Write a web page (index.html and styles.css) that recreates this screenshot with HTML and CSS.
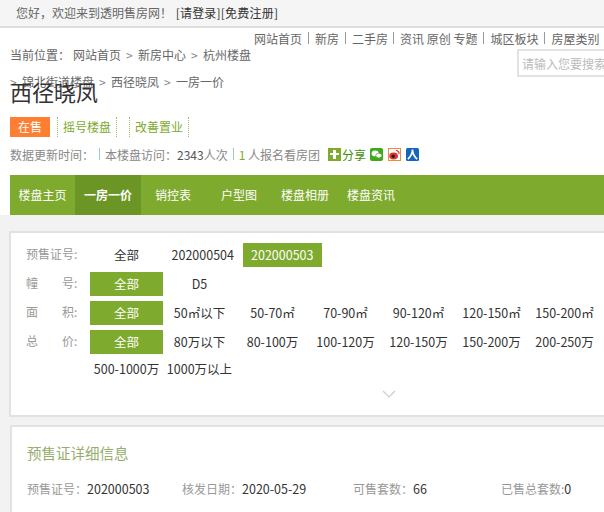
FILE: index.html
```html
<!DOCTYPE html>
<html lang="zh-CN">
<head>
    <meta charset="UTF-8">
    <meta name="viewport" content="width=device-width, initial-scale=1.0">
    <title>西径晓凤 一房一价</title>
    <link rel="stylesheet" href="styles.css">
</head>
<body>
    <div class="topbar">
        <span>您好，欢迎来到透明售房网！</span>
        <a class="login" href="#">[请登录][免费注册]</a>
    </div>

    <div class="head">
        <div class="crumbs">
            <span class="here">当前位置：</span>
            <a href="#">网站首页</a>
            <a href="#"><s>&gt;</s>新房中心</a>
            <a href="#"><s>&gt;</s>杭州楼盘</a>
            <a href="#"><s>&gt;</s>锦北街道楼盘</a>
            <a href="#"><s>&gt;</s>西径晓凤</a>
            <a href="#"><s>&gt;</s>一房一价</a>
        </div>
        <div class="head-right">
            <div class="site-nav">
                <a href="#">网站首页</a><i></i><a href="#">新房</a><i></i><a href="#">二手房</a><i class="tight"></i><a href="#">资讯 原创 专题</a><i></i><a href="#">城区板块</a><i></i><a href="#">房屋类别</a><i></i>
            </div>
            <div class="search"><span>请输入您要搜索的内容</span></div>
        </div>
    </div>

    <div class="estate">
        <h1>西径晓凤</h1>
        <div class="tags">
            <span class="status">在售</span>
            <span class="tag">摇号楼盘</span>
            <span class="tag">改善置业</span>
        </div>
        <div class="info">
            <span>数据更新时间：</span>
            <i></i>
            <span>本楼盘访问：<b>2343</b>人次</span>
            <i></i>
            <span><em>1</em> 人报名看房团</span>
            <span class="share">
                <svg class="ico" viewBox="0 0 13 13"><rect width="13" height="13" fill="#7eaa2e"/><path d="M5 2h3v3h3v2H8v4H5V7H2V5h3z" fill="#fff"/></svg>
                <span class="share-label">分享</span>
                <svg class="ico" viewBox="0 0 13 13"><rect width="13" height="13" rx="2" fill="#3fa91c"/><ellipse cx="5.2" cy="5.4" rx="3.6" ry="2.9" fill="#fff"/><ellipse cx="8.8" cy="7.6" rx="3" ry="2.4" fill="#fff" stroke="#3fa91c" stroke-width=".7"/></svg>
                <svg class="ico" viewBox="0 0 13 13"><rect x=".5" y=".5" width="12" height="12" fill="#fff" stroke="#f08a3c"/><ellipse cx="5.6" cy="8" rx="4.4" ry="3.4" fill="#e2322d"/><circle cx="5.2" cy="8.2" r="1.7" fill="#222"/><path d="M8 2.5a3 3 0 0 1 3 3.4" fill="none" stroke="#e2322d" stroke-width="1.2"/></svg>
                <svg class="ico" viewBox="0 0 13 13"><rect width="13" height="13" rx="1.5" fill="#1466b8"/><path d="M6.500 1.500C6.400 5.500 5 8.500 1.800 11M6.500 1.500C6.600 5.500 8 8.500 11.200 11" fill="none" stroke="#fff" stroke-width="1.700"/></svg>
            </span>
        </div>
    </div>

    <div class="tabs">
        <a href="#">楼盘主页</a>
        <a class="on" href="#">一房一价</a>
        <a href="#">销控表</a>
        <a href="#">户型图</a>
        <a href="#">楼盘相册</a>
        <a href="#">楼盘资讯</a>
    </div>

    <div class="main">
        <div class="panel filter">
            <div class="f-row">
                <span class="f-label">预售证号:</span>
                <div class="f-list">
                    <a href="#">全部</a>
                    <a class="wide" href="#">202000504</a>
                    <a class="wide sel" href="#">202000503</a>
                </div>
            </div>
            <div class="f-row">
                <span class="f-label">幢　　号:</span>
                <div class="f-list">
                    <a class="sel" href="#">全部</a>
                    <a href="#">D5</a>
                </div>
            </div>
            <div class="f-row">
                <span class="f-label">面　　积:</span>
                <div class="f-list">
                    <a class="sel" href="#">全部</a>
                    <a href="#">50㎡以下</a>
                    <a href="#">50-70㎡</a>
                    <a href="#">70-90㎡</a>
                    <a href="#">90-120㎡</a>
                    <a href="#">120-150㎡</a>
                    <a href="#">150-200㎡</a>
                </div>
            </div>
            <div class="f-row">
                <span class="f-label">总　　价:</span>
                <div class="f-list">
                    <a class="sel" href="#">全部</a>
                    <a href="#">80万以下</a>
                    <a href="#">80-100万</a>
                    <a href="#">100-120万</a>
                    <a href="#">120-150万</a>
                    <a href="#">150-200万</a>
                    <a href="#">200-250万</a>
                    <a href="#">500-1000万</a>
                    <a href="#">1000万以上</a>
                </div>
            </div>
            <div class="more">
                <svg width="14" height="9" viewBox="0 0 14 9"><path d="M1 1l6 6 6-6" fill="none" stroke="#ccc" stroke-width="1.200"/></svg>
            </div>
        </div>

        <div class="panel detail">
            <h2>预售证详细信息</h2>
            <div class="d-row">
                <span class="d-a"><label>预售证号：</label>202000503</span>
                <span class="d-b"><label>核发日期：</label>2020-05-29</span>
                <span class="d-c"><label>可售套数：</label>66</span>
                <span><label>已售总套数:</label>0</span>
            </div>
        </div>
    </div>
</body>
</html>
```

FILE: styles.css
```css
html, body {
    margin: 0;
    padding: 0;
    height: 512px;
    overflow: hidden;
}
body {
    width: 780px;
    font-family: "Noto Sans CJK SC", "Noto Sans", sans-serif;
    font-size: 12px;
    color: #666;
    background-color: white;
}
a {
    color: inherit;
    text-decoration: none;
}
.topbar {
    height: 26px;
    line-height: 26px;
    padding-left: 16px;
    background-color: #f5f5f5;
    border-bottom: 2px solid #ddd;
}
.login {
    margin-left: 1px;
    letter-spacing: .2px;
    color: #333;
}
.head {
    display: flex;
    height: 67px;
}
.crumbs {
    display: flex;
    flex-wrap: wrap;
    align-content: flex-start;
    column-gap: 5px;
    flex: none;
    width: 244px;
    height: 54px;
    margin: 13px 0 0 10px;
    line-height: 27px;
}
.crumbs a, .crumbs span {
    white-space: nowrap;
}
.crumbs .here {
    margin-right: -2px;
}
.crumbs s {
    display: inline-block;
    width: 7px;
    margin-right: 5px;
    color: #888;
    text-decoration: none;
}
.site-nav {
    display: flex;
    align-items: center;
    height: 20px;
}
.site-nav i {
    width: 1px;
    height: 12px;
    margin: 0 6px;
    background-color: #999;
}
.site-nav i.tight {
    margin-left: 5px;
}
.search {
    width: 120px;
    height: 24px;
    line-height: 26px;
    margin: 1px 0 0 263px;
    padding-left: 3px;
    border: 2px solid #e2e2e2;
    border-right: none;
    color: #bbb;
    white-space: nowrap;
    overflow: hidden;
}
.estate {
    padding-left: 10px;
}
h1 {
    margin: -19px 0 0;
    font-size: 22px;
    font-weight: normal;
    line-height: 30px;
    color: #333;
    position: relative;
}
.tags {
    display: flex;
    align-items: center;
    margin-top: 11px;
    height: 20px;
}
.status {
    width: 40px;
    line-height: 20px;
    text-align: center;
    color: white;
    background-color: #ff7f32;
    margin-right: 7px;
}
.tag {
    padding: 0 5px;
    margin-right: 12px;
    line-height: 20px;
    color: #7eaa2e;
    border-left: 1px dotted #9fc25e;
    border-right: 1px dotted #9fc25e;
}
.info {
    display: flex;
    align-items: center;
    height: 18px;
    margin-top: 8px;
    color: #888;
}
.info i {
    width: 1px;
    height: 12px;
    margin: 0 5px;
    background-color: #9cc;
}
.info b {
    font-weight: normal;
    color: #555;
}
.info em {
    font-style: normal;
    color: #7eaa2e;
}
.share {
    display: flex;
    align-items: center;
    margin-left: 8px;
    color: #3f8f10;
}
.ico {
    width: 13px;
    height: 13px;
    margin-right: 5px;
}
.share .ico:first-child {
    margin-right: 1px;
}
.share-label {
    margin-right: 4px;
}
.tabs {
    display: flex;
    height: 40px;
    margin: 12px 0 0 10px;
    background-color: #7eaa2e;
}
.tabs a {
    width: 66px;
    line-height: 40px;
    text-align: center;
    color: white;
}
.tabs a:first-child {
    width: 65px;
}
.tabs a:nth-child(n+3) {
    width: 64px;
    padding-right: 2px;
}
.tabs a.on {
    font-weight: bold;
    background-color: #6b9626;
}
.main {
    padding: 16px 0 0 9px;
    background-color: #f2f2f2;
    height: 300px;
}
.panel {
    width: 760px;
    box-sizing: border-box;
    background-color: white;
    border: 2px solid #e2e2e2;
}
.filter {
    height: 186px;
    padding: 10px 0 0 16px;
}
.f-row {
    display: flex;
    margin-bottom: 5px;
}
.f-label {
    width: 64px;
    margin-left: -1px;
    flex: none;
    line-height: 22px;
    color: #999;
}
.f-list {
    display: flex;
    flex-wrap: wrap;
    width: 520px;
    row-gap: 3px;
    font-size: 12.5px;
    color: #333;
}
.f-list a {
    width: 73px;
    height: 24px;
    line-height: 24px;
    text-align: center;
    white-space: nowrap;
}
.f-list a.wide {
    width: 79.5px;
}
.f-list a.sel {
    color: white;
    background-color: #7eaa2e;
}
.more {
    text-align: center;
    margin-top: 1px;
    margin-left: -16px;
    padding-top: 4px;
    line-height: 0;
}
.detail {
    margin: 8px 0 0 1px;
    height: 120px;
    padding: 15px 0 0 15px;
}
h2 {
    margin: 0;
    font-size: 14.5px;
    font-weight: normal;
    line-height: 22px;
    color: #96ad6c;
}
.d-row {
    display: flex;
    margin-top: 15px;
    line-height: 20px;
    font-size: 12.5px;
    color: #333;
}
.d-row label {
    font-size: 12px;
    color: #999;
}
.d-a {
    width: 155px;
}
.d-b {
    width: 171px;
}
.d-c {
    width: 148px;
}
```
